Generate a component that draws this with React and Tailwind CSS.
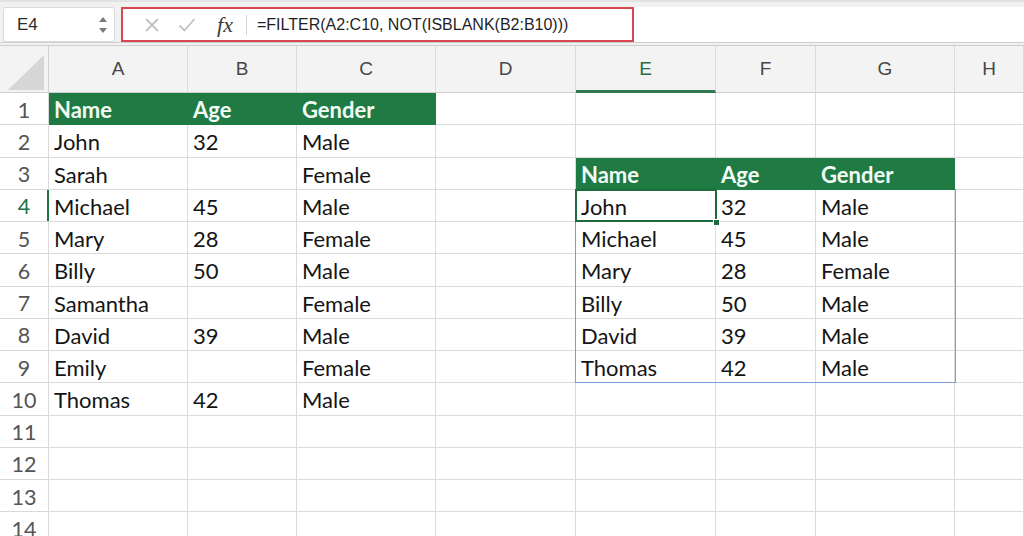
import React from "react";

const W = ["w-[139px]", "w-[109px]", "w-[139px]", "w-[140px]", "w-[140px]", "w-[100px]", "w-[139px]", "flex-1"];
const LETTERS = ["A", "B", "C", "D", "E", "F", "G", "H"];

const DATA = {
  1: ["Name", "Age", "Gender"],
  2: ["John", "32", "Male"],
  3: ["Sarah", "", "Female", "", "Name", "Age", "Gender"],
  4: ["Michael", "45", "Male", "", "John", "32", "Male"],
  5: ["Mary", "28", "Female", "", "Michael", "45", "Male"],
  6: ["Billy", "50", "Male", "", "Mary", "28", "Female"],
  7: ["Samantha", "", "Female", "", "Billy", "50", "Male"],
  8: ["David", "39", "Male", "", "David", "39", "Male"],
  9: ["Emily", "", "Female", "", "Thomas", "42", "Male"],
  10: ["Thomas", "42", "Male"],
};

const isGreen = (r, c) => (r === 1 && c <= 2) || (r === 3 && c >= 4 && c <= 6);

function Row({ r }) {
  const vals = DATA[r] || [];
  const sel = r === 4;
  return (
    <div className="flex h-[32.25px]">
      <div
        className={`relative w-[49px] shrink-0 flex items-center justify-center pt-[2px] border-r border-b border-[#d9d9d9] bg-white text-[21.5px] ${
          sel ? "text-[#217346]" : "text-[#555555]"
        }`}
      >
        {r}
        {sel && <div className="absolute right-[-1px] top-0 bottom-0 w-[2px] bg-[#217346]" />}
      </div>
      {LETTERS.map((_, c) => {
        const g = isGreen(r, c);
        const v = vals[c] || "";
        return (
          <div
            key={c}
            className={`${W[c]} shrink-0 flex items-center pl-[5px] pt-[3px] border-b ${
              g
                ? "bg-[#1f7a43] border-[#1f7a43] border-r font-bold text-[#f2fbf4]"
                : "bg-white border-[#dadada] border-r text-[#151515]"
            } text-[22px] leading-none overflow-hidden whitespace-nowrap`}
          >
            {v}
          </div>
        );
      })}
    </div>
  );
}

export default function App() {
  return (
    <div
      className="w-[1024px] h-[536px] overflow-hidden bg-white relative"
      style={{ fontFamily: "Lato, 'Open Sans', sans-serif" }}
    >
      {/* Top bar */}
      <div className="h-[43px] bg-[#f1f1f1] border-t-2 border-[#e2e2e2] border-b border-b-[#cfcfcf] flex items-start pt-[5px] pl-[3px]">
        <div className="w-[112px] h-[35px] bg-white border border-[#d9d9d9] rounded-[3px] flex items-center pl-[13px] pr-[6px] justify-between">
          <span className="text-[17px] text-[#2b2b2b]" style={{ fontFamily: "'Liberation Sans', sans-serif" }}>
            E4
          </span>
          <svg width="10" height="22" viewBox="0 0 10 22">
            <path d="M1 8 L5 3 L9 8 Z" fill="#7a7a7a" />
            <path d="M1 14 L5 19 L9 14 Z" fill="#7a7a7a" />
          </svg>
        </div>
        <div className="relative ml-[6px] flex-1 h-[35px] bg-white flex items-center">
          <div className="w-[46px] flex justify-end pr-[7px]">
            <svg width="16" height="16" viewBox="0 0 16 16">
              <path d="M2 2 L14 14 M14 2 L2 14" stroke="#c2c2c2" strokeWidth="1.8" fill="none" />
            </svg>
          </div>
          <div className="w-[39px] flex justify-center">
            <svg width="18" height="16" viewBox="0 0 18 16">
              <path d="M1.5 8.5 L6.5 13.5 L16.5 2" stroke="#c2c2c2" strokeWidth="1.8" fill="none" />
            </svg>
          </div>
          <div className="w-[38px] flex justify-center">
            <span
              className="italic text-[22px] text-[#3a3a3a] leading-none"
              style={{ fontFamily: "'Liberation Serif', serif" }}
            >
              fx
            </span>
          </div>
          <div className="w-px h-[20px] bg-[#d4d4d4] ml-[2px]" />
          <span
            className="ml-[10px] text-[16px] text-[#1f1f1f]"
            style={{ fontFamily: "'Liberation Sans', sans-serif" }}
          >
            =FILTER(A2:C10, NOT(ISBLANK(B2:B10)))
          </span>
          <div className="absolute left-0 top-0 bottom-0 w-[513px] border-2 border-[#d8464f] pointer-events-none" />
        </div>
      </div>
      <div className="h-[3px] bg-[#f1f1f1] border-b border-[#cfcfcf]" />

      {/* Grid */}
      <div className="relative">
        <div className="flex h-[47px] bg-[#f3f3f3]">
          <div className="relative w-[49px] shrink-0 border-r border-b border-[#d0d0d0]">
            <svg className="absolute left-[8px] top-[9px]" width="37" height="35" viewBox="0 0 37 35">
              <path d="M36 0 L36 35 L0 35 Z" fill="#d6d6d6" />
            </svg>
          </div>
          {LETTERS.map((l, c) => (
            <div
              key={l}
              className={`${W[c]} shrink-0 flex items-center justify-center border-r border-[#dcdcdc] text-[19px] ${
                c === 4 ? "text-[#2d6b46] border-b-[3px] border-b-[#2f7a4f]" : "text-[#474747] border-b border-b-[#cfcfcf]"
              }`}
              style={{ fontFamily: "'Liberation Sans', sans-serif" }}
            >
              <span className={c === 4 ? "mt-[2px]" : ""}>{l}</span>
            </div>
          ))}
        </div>
        {Array.from({ length: 14 }, (_, i) => (
          <Row key={i} r={i + 1} />
        ))}

        {/* Spill range border E4:G9 */}
        <div className="absolute left-[575px] top-[142.75px] w-[381px] h-[194.5px] border border-t-0 border-[#7b9ed8] pointer-events-none" />
        {/* Active cell E4 */}
        <div className="absolute left-[575px] top-[142.75px] w-[142px] h-[33.5px] border-2 border-[#1f6b3f] pointer-events-none" />
        <div className="absolute left-[713px] top-[172.5px] w-[7px] h-[7px] bg-[#1f6b3f] border border-white pointer-events-none" />
      </div>
    </div>
  );
}
